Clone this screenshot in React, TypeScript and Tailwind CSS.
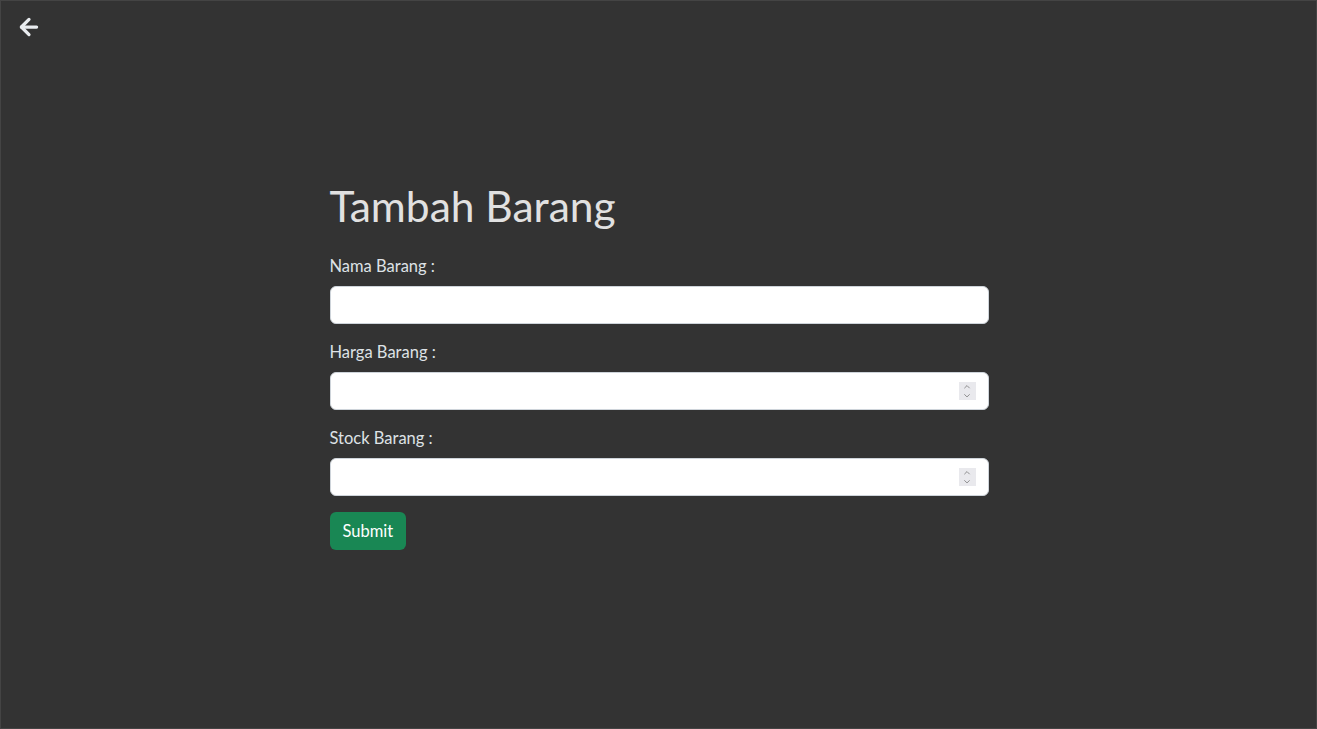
import React from 'react';
import { ArrowLeft, ChevronUp, ChevronDown } from 'lucide-react';

const fields = [
  { id: 'nama', label: 'Nama Barang :', number: false },
  { id: 'harga', label: 'Harga Barang :', number: true },
  { id: 'stock', label: 'Stock Barang :', number: true },
];

export default function App() {
  return (
    <div
      className="min-h-screen bg-[#333333] text-[#dee2e6] border border-[#444] relative"
      style={{ fontFamily: 'Lato, "Noto Sans", sans-serif' }}
    >
      {/* Back button */}
      <button className="absolute left-[15px] top-[13px] text-[#e9ecef]">
        <ArrowLeft size={26} strokeWidth={3} />
      </button>

      <div className="w-[660px] mx-auto pl-px pt-[180px]">
        <h1 className="text-[42.5px] leading-[50px] font-normal mb-[23px] text-[#e1e1e1]">Tambah Barang</h1>

        <form className="flex flex-col">
          {fields.map((f) => (
            <div key={f.id} className="mb-[16px]">
              <label htmlFor={f.id} className="block text-[16.5px] leading-[24px] mb-[8px]">
                {f.label}
              </label>
              <div className="relative">
                <input
                  id={f.id}
                  type="text"
                  className="w-full h-[38px] rounded-[6px] bg-white border border-[#ced4da] px-3 text-black outline-none"
                />
                {f.number && (
                  <div className="absolute right-[13px] top-[10px] w-[17px] h-[18px] bg-[#e9e9ed] flex flex-col items-center justify-center text-[#808080] -space-y-[1px]">
                    <ChevronUp size={10} strokeWidth={2.2} />
                    <ChevronDown size={10} strokeWidth={2.2} />
                  </div>
                )}
              </div>
            </div>
          ))}
          <div>
            <button
              type="button"
              className="h-[38px] px-[13px] rounded-[6px] bg-[#198754] text-white text-[16.5px]"
            >
              Submit
            </button>
          </div>
        </form>
      </div>
    </div>
  );
}
